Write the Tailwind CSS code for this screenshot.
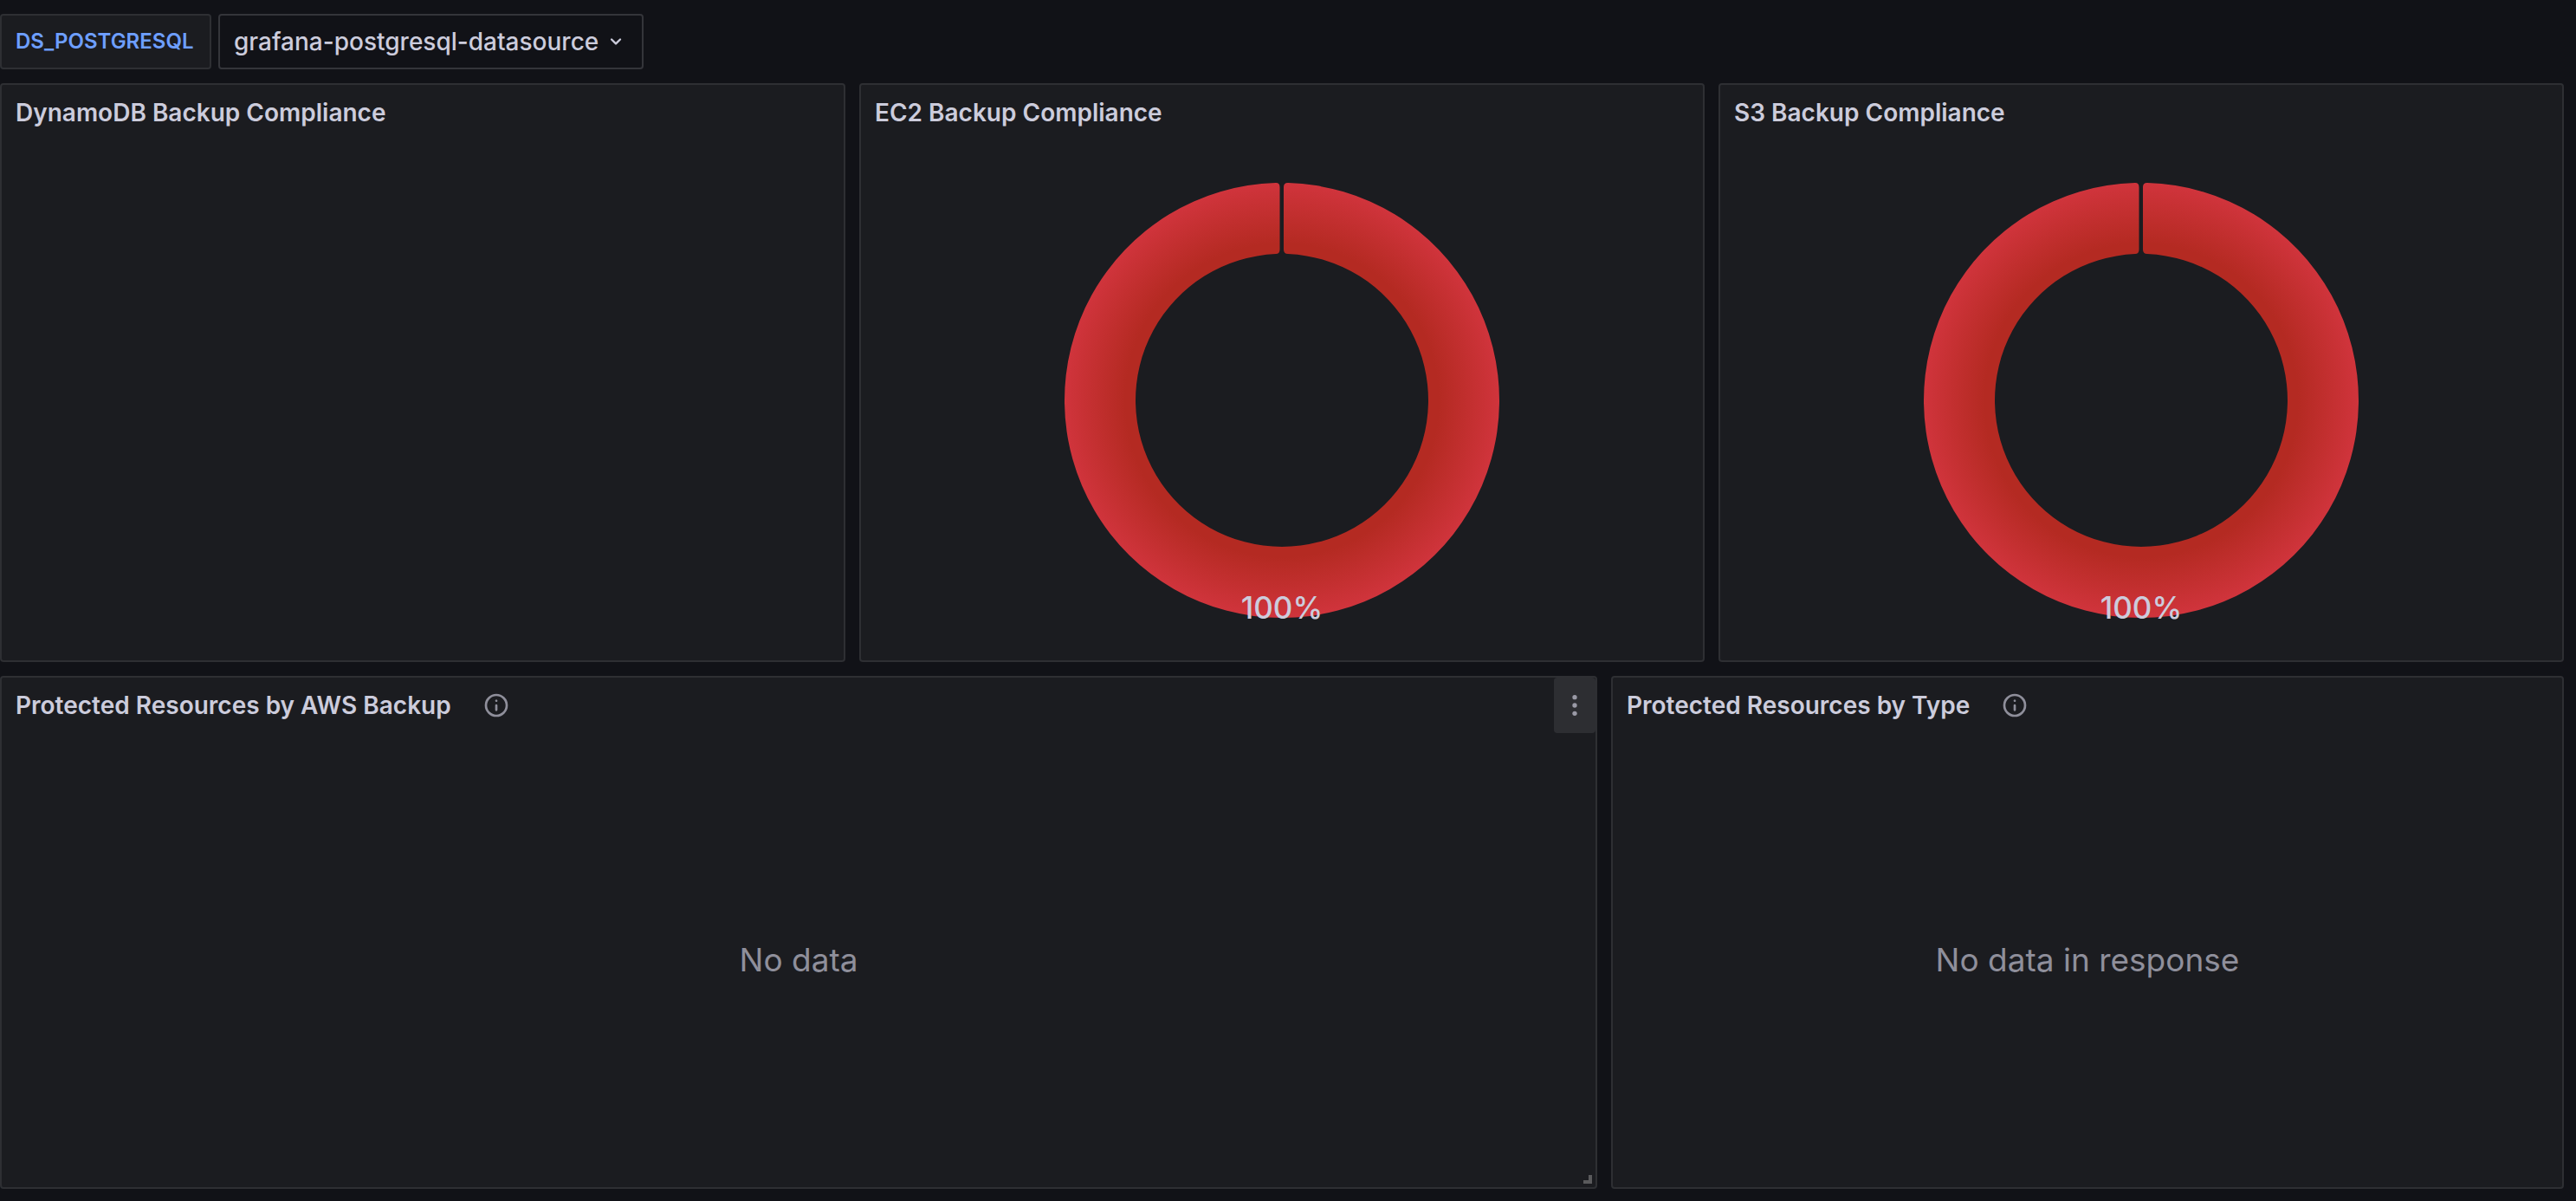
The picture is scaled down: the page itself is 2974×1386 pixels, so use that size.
<!DOCTYPE html>
<html lang="en">
<head>
<meta charset="utf-8">
<meta name="viewport" content="width=device-width, initial-scale=1">
<title>Backup Compliance</title>
<script src="https://cdn.jsdelivr.net/npm/@tailwindcss/browser@4"></script>
</head>
<body class="min-h-screen bg-[#111217] font-['Inter',sans-serif] text-[28px] leading-[44px] text-[#ccccdc]">
<svg class="absolute size-0" aria-hidden="true">
  <defs>
    <radialGradient id="ring" gradientUnits="userSpaceOnUse" cx="252" cy="252" r="251">
      <stop offset="0.72" stop-color="#b42a22"/>
      <stop offset="1" stop-color="#d0343c"/>
    </radialGradient>
    <symbol id="info" viewBox="0 0 24 24">
      <path fill="currentColor" d="M12,2A10,10,0,1,0,22,12,10,10,0,0,0,12,2Zm0,18a8,8,0,1,1,8-8A8,8,0,0,1,12,20Zm0-9a1,1,0,0,0-1,1v4a1,1,0,0,0,2,0V12A1,1,0,0,0,12,11Zm.38-3.92a1,1,0,0,0-.76,0,1,1,0,0,0-.33.21,1.15,1.15,0,0,0-.21.33A.84.84,0,0,0,11,8a1,1,0,0,0,.29.71,1.15,1.15,0,0,0,.33.21A1,1,0,0,0,13,8a1.05,1.05,0,0,0-.29-.71A1.15,1.15,0,0,0,12.38,7.08Z"/>
    </symbol>
    <symbol id="donut" viewBox="0 0 504 504">
      <path fill="url(#ring)" d="M254 6 Q254 1 259 1.1 A251 251 0 1 1 245 1.1 Q249.500 1 249.500 6 V78 Q249.500 83 245 83.100 A169 169 0 1 0 259 83.100 Q254 83 254 78 Z"/>
    </symbol>
  </defs>
</svg>

<form class="flex gap-2 pt-4 pb-4">
  <label for="datasource" class="flex h-16 min-w-[244px] items-center rounded-sm border-2 border-[#2e2f33] bg-[#1b1c20] px-4 text-[24px] font-semibold text-[#6e9fff]">DS_POSTGRESQL</label>
  <div class="relative">
    <select id="datasource" class="field-sizing-content h-16 appearance-none rounded-sm border-2 border-[#34353a] bg-[#111217] pr-[50px] pl-4 text-[28px] font-medium">
      <option>grafana-postgresql-datasource</option>
    </select>
    <svg class="pointer-events-none absolute top-[18px] right-[18px] size-7" viewBox="0 0 24 24" aria-hidden="true"><path fill="currentColor" d="M17,9.170a1,1,0,0,0-1.410,0L12,12.710,8.460,9.170a1,1,0,0,0-1.410,0,1,1,0,0,0,0,1.420l4.240,4.240a1,1,0,0,0,1.420,0L17,10.590A1,1,0,0,0,17,9.170Z"/></svg>
  </div>
</form>

<main class="mr-3.5 grid auto-rows-[60px] grid-cols-[repeat(24,minmax(0,1fr))] gap-4">
  <section class="col-span-8 row-span-9 flex flex-col rounded-sm border-2 border-[#2e2f33] bg-[#1b1c20]">
    <h2 class="flex h-16 items-center px-4 font-semibold">DynamoDB Backup Compliance</h2>
  </section>

  <section class="col-span-8 row-span-9 flex flex-col rounded-sm border-2 border-[#2e2f33] bg-[#1b1c20]">
    <h2 class="flex h-16 items-center px-4 font-semibold">EC2 Backup Compliance</h2>
    <div class="flex flex-1 items-center justify-center">
      <svg class="size-[504px] overflow-visible" viewBox="0 0 504 504" role="img" aria-label="EC2 compliance 100%">
        <use href="#donut"/>
        <text x="252" y="504" text-anchor="middle" class="fill-[#ccccdc] text-[35px] font-medium">100%</text>
      </svg>
    </div>
  </section>

  <section class="col-span-8 row-span-9 flex flex-col rounded-sm border-2 border-[#2e2f33] bg-[#1b1c20]">
    <h2 class="flex h-16 items-center px-4 font-semibold">S3 Backup Compliance</h2>
    <div class="flex flex-1 items-center justify-center">
      <svg class="size-[504px] overflow-visible" viewBox="0 0 504 504" role="img" aria-label="S3 compliance 100%">
        <use href="#donut"/>
        <text x="252" y="504" text-anchor="middle" class="fill-[#ccccdc] text-[35px] font-medium">100%</text>
      </svg>
    </div>
  </section>

  <section class="relative row-span-8 flex flex-col rounded-sm border-2 border-[#2e2f33] bg-[#1b1c20] [grid-column:span_15]">
    <header class="flex h-16 items-center gap-9 pl-4">
      <h2 class="font-semibold">Protected Resources by AWS Backup</h2>
      <svg class="size-8 text-[#8f8f9b]" role="img" aria-label="Panel description"><use href="#info"/></svg>
      <button type="button" aria-label="Panel menu" class="ml-auto flex h-16 w-12 items-center justify-center rounded-sm bg-[#2d2e32] text-[#9a9aa6]">
        <svg class="size-8" viewBox="0 0 24 24" fill="currentColor" aria-hidden="true"><circle cx="12" cy="5" r="2"/><circle cx="12" cy="12" r="2"/><circle cx="12" cy="19" r="2"/></svg>
      </button>
    </header>
    <p class="flex flex-1 items-center justify-center text-[37px] text-[#8f8f9b]">No data</p>
    <span class="absolute right-1 bottom-1 size-2.5 border-r-4 border-b-4 border-[#5a5a5c]"></span>
  </section>

  <section class="row-span-8 flex flex-col rounded-sm border-2 border-[#2e2f33] bg-[#1b1c20] [grid-column:span_9]">
    <header class="flex h-16 items-center gap-9 pl-4">
      <h2 class="font-semibold">Protected Resources by Type</h2>
      <svg class="size-8 text-[#8f8f9b]" role="img" aria-label="Panel description"><use href="#info"/></svg>
    </header>
    <p class="flex flex-1 items-center justify-center text-[37px] text-[#8f8f9b]">No data in response</p>
  </section>
</main>
</body>
</html>
